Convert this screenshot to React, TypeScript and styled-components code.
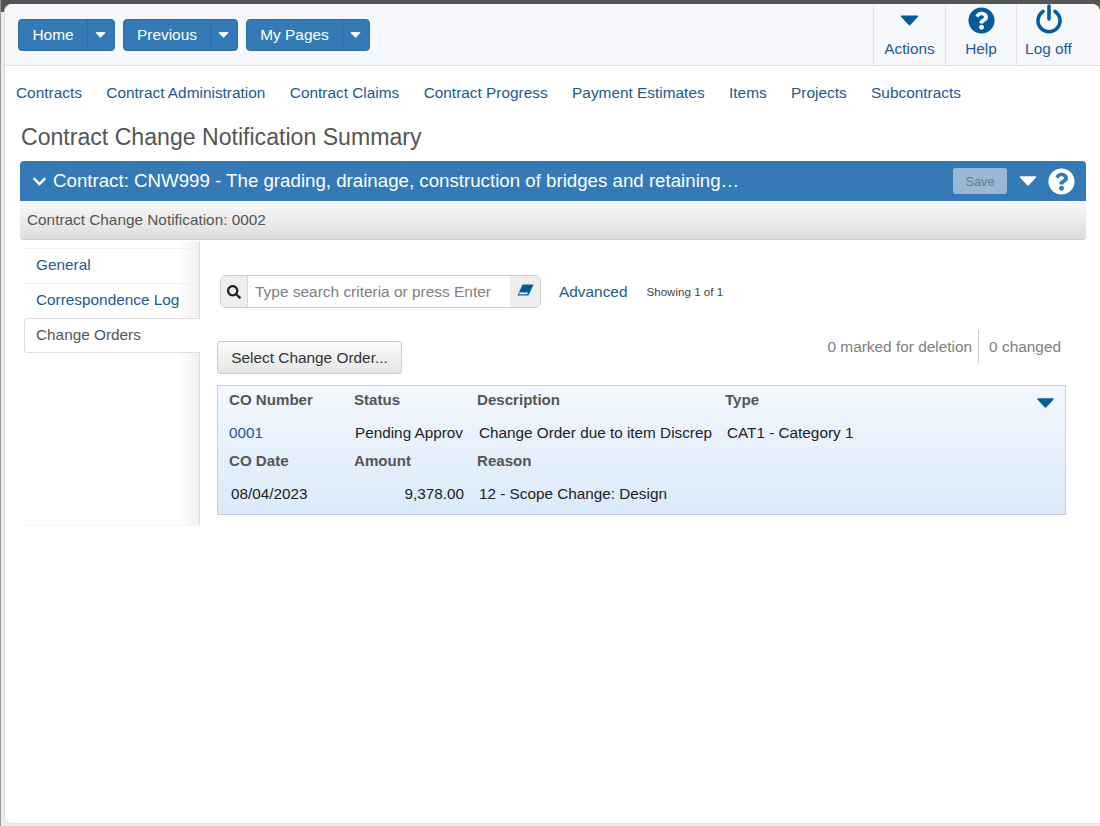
import React from "react";
import styled, { createGlobalStyle } from "styled-components";
import { FaQuestionCircle, FaSearch, FaChevronDown } from "react-icons/fa";

const Global = createGlobalStyle`
  html, body { margin: 0; padding: 0; background: #fff; }
  body { font-family: "Liberation Sans", Arial, sans-serif; overflow: hidden; }
  * { box-sizing: border-box; }
`;

const Screen = styled.div`
  width: 1100px;
  height: 826px;
  padding: 4px 0 2px 3px;
  background: linear-gradient(#555 0 12px, #ececec 12px);
  border-left: 1px solid #999;
`;
const Win = styled.div`
  height: 100%;
  background: #fff;
  border-radius: 8px 8px 0 8px;
  border-left: 1px solid #ddd;
  border-bottom: 1px solid #ddd;
  overflow: hidden;
`;
const Header = styled.header`
  height: 62px;
  background: #f6f8fb;
  border-bottom: 1px solid #e0e0e0;
  display: flex;
  align-items: flex-start;
  justify-content: space-between;
  padding-left: 13px;
`;
const BtnRow = styled.div`
  display: flex;
  gap: 8px;
  padding-top: 15px;
`;
const Split = styled.div<{ $w: number }>`
  display: flex;
  height: 32px;
  width: ${(p) => p.$w}px;
  background: #337ab7;
  border: 1px solid #2e6da4;
  border-radius: 4px;
  color: #fff;
  font-size: 15.4px;
`;
const SplitLabel = styled.span`
  flex: 1;
  display: flex;
  align-items: center;
  justify-content: center;
  border-right: 1px solid #2e6da4;
`;
const SplitCaret = styled.span`
  width: 26px;
  padding-right: 1px;
  display: flex;
  align-items: center;
  justify-content: center;
`;
const Actions = styled.div`
  display: flex;
  height: 61px;
  margin-right: 20px;
`;
const Action = styled.div<{ $w: number }>`
  width: ${(p) => p.$w}px;
  border-left: 1px solid #e3e6ea;
  display: flex;
  flex-direction: column;
  align-items: center;
  color: #1c5a8f;
  font-size: 15.4px;
`;
const ActionIcon = styled.div`
  height: 33px;
  margin-bottom: 3px;
  display: flex;
  align-items: center;
  justify-content: center;
  color: #045c9c;
  flex: none;
`;
const ActionText = styled.span`
  line-height: 17px;
`;
const Nav = styled.nav`
  display: flex;
  gap: 24.4px;
  padding: 18px 0 0 11px;
  font-size: 15.4px;
  line-height: 17px;
  color: #1c5a8f;
`;
const Title = styled.h1`
  margin: 0;
  padding: 22px 0 0 16px;
  font-size: 23.1px;
  line-height: 29px;
  font-weight: 400;
  color: #555;
`;
const Panel = styled.section`
  margin: 9px 0 0 15px;
  width: 1066px;
`;
const BlueBar = styled.div`
  height: 40px;
  background: #337ab7;
  border-radius: 4px 4px 0 0;
  display: flex;
  align-items: center;
  color: #fff;
  padding: 0 11px 0 12px;
  font-size: 18.7px;
`;
const BarTitle = styled.span`
  margin-left: 6px;
  flex: 1;
`;
const SaveBtn = styled.span`
  width: 54px;
  height: 26px;
  background: #99b8d5;
  border-radius: 3px;
  color: #5f7d99;
  font-size: 12.8px;
  display: flex;
  align-items: center;
  justify-content: center;
  margin-right: 12px;
`;
const BarCaret = styled.span`
  display: flex;
  margin-right: 11px;
`;
const SubBar = styled.div`
  height: 39px;
  background: linear-gradient(#fafafa, #dddddd);
  border-radius: 0 0 4px 4px;
  border-bottom: 1px solid #ccc;
  display: flex;
  align-items: center;
  padding-left: 7px;
  color: #555;
  font-size: 15.35px;
`;
const Body = styled.div`
  display: flex;
  margin-left: 19px;
  padding-top: 2px;
`;
const Side = styled.aside`
  width: 176px;
  height: 284px;
  padding-top: 6px;
  border-right: 1px solid #ddd;
  background: linear-gradient(to right, #fff 88%, #f1f1f1);
  flex: none;
  border-bottom: 1px solid #f6f6f6;
`;
const Tab = styled.div<{ $on?: boolean }>`
  height: 35px;
  display: flex;
  align-items: center;
  padding-left: ${(p) => (p.$on ? "11px" : "12px")};
  padding-bottom: 2px;
  font-size: 15.35px;
  color: ${(p) => (p.$on ? "#555" : "#1c5a8f")};
  background: ${(p) => (p.$on ? "#fff" : "transparent")};
  border-top: 1px solid ${(p) => (p.$on ? "#ddd" : "#f1f1f1")};
  ${(p) =>
    p.$on
      ? `border-left: 1px solid #ddd; border-bottom: 1px solid #ddd; border-radius: 4px 0 0 4px; margin-right: -1px; position: relative;`
      : ""}
`;
const Main = styled.main`
  flex: 1;
  padding: 33px 0 0 17px;
`;
const SearchRow = styled.div`
  display: flex;
  align-items: center;
  padding-left: 3px;
`;
const SearchBox = styled.div`
  width: 321px;
  height: 33px;
  display: flex;
  border: 1px solid #ccc;
  border-radius: 6px;
  overflow: hidden;
  background: #fff;
`;
const SearchAddon = styled.span`
  width: 27px;
  background: #eee;
  border-right: 1px solid #ddd;
  display: flex;
  align-items: center;
  justify-content: center;
  color: #222;
  flex: none;
`;
const SearchInput = styled.span`
  flex: 1;
  display: flex;
  align-items: center;
  padding-left: 7px;
  color: #808080;
  font-size: 15.45px;
  white-space: nowrap;
`;
const EraseAddon = styled.span`
  width: 30px;
  background: #eee;
  display: flex;
  align-items: center;
  justify-content: center;
  flex: none;
  padding-bottom: 4px;
`;
const Advanced = styled.span`
  margin-left: 18px;
  color: #1c5a8f;
  font-size: 15.4px;
`;
const Showing = styled.span`
  margin-left: 19px;
  color: #444;
  font-size: 11.6px;
`;
const ToolRow = styled.div`
  display: flex;
  justify-content: space-between;
  align-items: flex-start;
  margin-top: 33px;
  padding-right: 39px;
`;
const SelectBtn = styled.span`
  width: 185px;
  height: 33px;
  border: 1px solid #ccc;
  border-radius: 3px;
  background: linear-gradient(#fbfbfb, #e6e6e6);
  color: #333;
  font-size: 15.4px;
  display: flex;
  align-items: center;
  justify-content: center;
`;
const Counts = styled.div`
  display: flex;
  margin-top: -11px;
  height: 33px;
  align-items: center;
  color: #808080;
  font-size: 15.4px;
`;
const CountDivider = styled.span`
  margin-left: 6px;
  padding-left: 10px;
  border-left: 1px solid #ccc;
  height: 33px;
  display: flex;
  align-items: center;
`;
const Card = styled.div`
  margin-top: 11px;
  width: 849px;
  height: 130px;
  background: linear-gradient(#f3f8fe, #dae9f9);
  border: 1px solid #c8cfd7;
  position: relative;
`;
const Row = styled.div<{ $h: number; $pt?: number }>`
  display: grid;
  grid-template-columns: 125px 123px 248px 1fr;
  height: ${(p) => p.$h}px;
  padding-top: ${(p) => p.$pt ?? 0}px;
  align-items: center;
  padding-left: 11px;
`;
const Head = styled.span`
  font-size: 15.1px;
  font-weight: 700;
  color: #555;
  padding-bottom: 2px;
`;
const Cell = styled.span<{ $right?: boolean; $pl?: number }>`
  font-size: 15.3px;
  color: #222;
  margin-right: 13px;
  padding-left: ${(p) => p.$pl ?? 2}px;
  white-space: nowrap;
  text-align: ${(p) => (p.$right ? "right" : "left")};
`;
const CoLink = styled(Cell)`
  color: #1c5a8f;
`;
const CardCaret = styled.span`
  position: absolute;
  right: 10px;
  top: 12px;
  display: flex;
`;

const Caret = ({ w, h, color }: { w: number; h: number; color: string }) => (
  <svg width={w} height={h} viewBox="0 0 18 10">
    <path d="M1.5 1h15L9 9z" fill={color} stroke={color} strokeWidth="1.5" strokeLinejoin="round" />
  </svg>
);

const Power = () => (
  <svg width="28" height="30" viewBox="0 0 28 30" style={{ marginTop: -3 }}>
    <path d="M8 7.5a11 11 0 1 0 12 0" fill="none" stroke="#045c9c" strokeWidth="3.6" strokeLinecap="round" />
    <path d="M14 2v13" stroke="#045c9c" strokeWidth="3.6" strokeLinecap="round" />
  </svg>
);

const Eraser = () => (
  <svg width="17" height="12" viewBox="0 0 17 12">
    <path d="M5.6 .5H16.5L11.4 11.5H.5z" fill="#045c9c" />
    <path d="M2.7 8.4h8.4l-.9 1.9H1.9z" fill="#fff" />
  </svg>
);

const navItems = ["Contracts", "Contract Administration", "Contract Claims", "Contract Progress", "Payment Estimates", "Items", "Projects", "Subcontracts"];

export default function App() {
  return (
    <>
      <Global />
      <Screen>
        <Win>
          <Header>
            <BtnRow>
              <Split $w={97}>
                <SplitLabel>Home</SplitLabel>
                <SplitCaret><Caret w={11} h={6} color="#fff" /></SplitCaret>
              </Split>
              <Split $w={115}>
                <SplitLabel>Previous</SplitLabel>
                <SplitCaret><Caret w={11} h={6} color="#fff" /></SplitCaret>
              </Split>
              <Split $w={124}>
                <SplitLabel>My Pages</SplitLabel>
                <SplitCaret><Caret w={11} h={6} color="#fff" /></SplitCaret>
              </Split>
            </BtnRow>
            <Actions>
              <Action $w={72}>
                <ActionIcon><Caret w={19} h={11} color="#045c9c" /></ActionIcon>
                <ActionText>Actions</ActionText>
              </Action>
              <Action $w={71}>
                <ActionIcon><FaQuestionCircle size={27} /></ActionIcon>
                <ActionText>Help</ActionText>
              </Action>
              <Action $w={64}>
                <ActionIcon><Power /></ActionIcon>
                <ActionText>Log off</ActionText>
              </Action>
            </Actions>
          </Header>
          <Nav>
            {navItems.map((n) => (
              <span key={n}>{n}</span>
            ))}
          </Nav>
          <Title>Contract Change Notification Summary</Title>
          <Panel>
            <BlueBar>
              <FaChevronDown size={15} />
              <BarTitle>Contract: CNW999 - The grading, drainage, construction of bridges and retaining…</BarTitle>
              <SaveBtn>Save</SaveBtn>
              <BarCaret><Caret w={18} h={10} color="#fff" /></BarCaret>
              <FaQuestionCircle size={27} />
            </BlueBar>
            <SubBar>Contract Change Notification: 0002</SubBar>
          </Panel>
          <Body>
            <Side>
              <Tab>General</Tab>
              <Tab>Correspondence Log</Tab>
              <Tab $on>Change Orders</Tab>
            </Side>
            <Main>
              <SearchRow>
                <SearchBox>
                  <SearchAddon><FaSearch size={14} /></SearchAddon>
                  <SearchInput>Type search criteria or press Enter</SearchInput>
                  <EraseAddon><Eraser /></EraseAddon>
                </SearchBox>
                <Advanced>Advanced</Advanced>
                <Showing>Showing 1 of 1</Showing>
              </SearchRow>
              <ToolRow>
                <SelectBtn>Select Change Order...</SelectBtn>
                <Counts>
                  <span>0 marked for deletion</span>
                  <CountDivider>0 changed</CountDivider>
                </Counts>
              </ToolRow>
              <Card>
                <CardCaret><Caret w={19} h={10} color="#045c9c" /></CardCaret>
                <Row $h={28}>
                  <Head>CO Number</Head>
                  <Head>Status</Head>
                  <Head>Description</Head>
                  <Head>Type</Head>
                </Row>
                <Row $h={38}>
                  <CoLink $pl={0}>0001</CoLink>
                  <Cell $pl={1}>Pending Approv</Cell>
                  <Cell>Change Order due to item Discrep</Cell>
                  <Cell>CAT1 - Category 1</Cell>
                </Row>
                <Row $h={18}>
                  <Head>CO Date</Head>
                  <Head>Amount</Head>
                  <Head>Reason</Head>
                </Row>
                <Row $h={44} $pt={4}>
                  <Cell>08/04/2023</Cell>
                  <Cell $right>9,378.00</Cell>
                  <Cell>12 - Scope Change: Design</Cell>
                </Row>
              </Card>
            </Main>
          </Body>
        </Win>
      </Screen>
    </>
  );
}
